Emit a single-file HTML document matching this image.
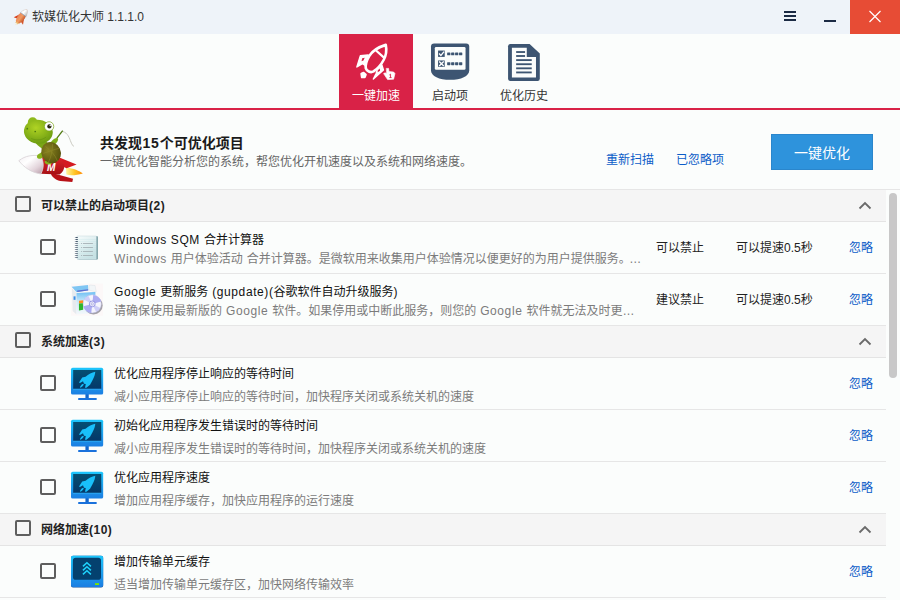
<!DOCTYPE html>
<html lang="zh-CN">
<head>
<meta charset="utf-8">
<title>软媒优化大师</title>
<style>
*{box-sizing:border-box;margin:0;padding:0}
html,body{width:900px;height:600px;overflow:hidden}
body{position:relative;background:#fbfdfc;font-family:"Liberation Sans","Noto Sans CJK SC",sans-serif;font-size:12px;line-height:16px;color:#111}
.abs{position:absolute}
#titlebar{position:absolute;left:0;top:0;width:900px;height:34px;background:#eef3f9}
#title{position:absolute;left:32px;top:9px;height:16px;line-height:16px;color:#333;white-space:nowrap}
#close{position:absolute;left:850px;top:0;width:50px;height:34px;background:#e74c35}
.bar{position:absolute;background:#1b2a44}
#tabline{position:absolute;left:0;top:108px;width:900px;height:2px;background:#d92247}
.tab{position:absolute;top:34px;width:74px;height:74px}
.tab .lbl{position:absolute;left:0;width:74px;top:54px;height:16px;line-height:16px;text-align:center;color:#333;white-space:nowrap}
.tab.on{background:#d92247}
.tab.on .lbl{color:#fff}
.tab svg{position:absolute}
#banner{position:absolute;left:0;top:110px;width:900px;height:79px}
#h1{position:absolute;left:100px;top:134px;font-size:14px;font-weight:bold;line-height:18px;color:#1a1a1a;white-space:nowrap}
#sub{position:absolute;left:100px;top:154px;line-height:16px;color:#666;white-space:nowrap}
.link{position:absolute;color:#0b5cc8;white-space:nowrap;line-height:16px}
#btn{position:absolute;left:771px;top:134px;width:102px;height:36px;background:#2e93dc;border:1px solid #2a86cc;color:#fff;font-size:14px;line-height:36px;text-align:center}
#topline{position:absolute;left:0;top:189px;width:900px;height:1px;background:#e6e6e6}
.sec{position:absolute;left:0;width:886px;height:32px;background:#f5f5f5;border-bottom:1px solid #e4e4e4}
.sec .cb{left:15px;top:6px}
.sec .t{position:absolute;left:41px;top:8px;line-height:16px;font-weight:bold;color:#222;white-space:nowrap}
.sec svg{position:absolute;left:858px;top:11px}
.cb{position:absolute;width:16px;height:16px;border:2px solid #5e5e5e;border-radius:2px}
.row{position:absolute;left:0;width:886px;height:52px;border-bottom:1px solid #e6e6e6}
.row .cb{left:40px;top:17px}
.row .t{position:absolute;left:114px;line-height:16px;color:#111;white-space:nowrap}
.row .d{position:absolute;left:114px;line-height:16px;color:#7b7b7b;white-space:nowrap}
.row.a .t{top:10px}.row.a .d{top:29px}
.row.b .t{top:8px}.row.b .d{top:31px}
.row .s1{position:absolute;left:656px;top:18px;line-height:16px;white-space:nowrap;color:#222}
.row .s2{position:absolute;left:736px;top:18px;line-height:16px;white-space:nowrap;color:#222}
.row .ig{position:absolute;left:849px;top:18px;line-height:16px;color:#0b5cc8;white-space:nowrap}
svg.ic{position:absolute}
.en{letter-spacing:.6px}
#thumb{position:absolute;left:889px;top:193px;width:8px;height:185px;border-radius:4px;background:#c8c8c8}
</style>
</head>
<body>
<svg width="0" height="0" style="position:absolute"><defs>
<linearGradient id="gm" x1="0" y1="0" x2="0" y2="1"><stop offset="0" stop-color="#1cc6fb"/><stop offset="1" stop-color="#1b7ee2"/></linearGradient>
<linearGradient id="gs" x1="0" y1="0" x2="0" y2="1"><stop offset="0" stop-color="#054f72"/><stop offset="1" stop-color="#043869"/></linearGradient>
</defs></svg>
<div id="titlebar">
  <svg class="abs" style="left:8px;top:4px" width="30" height="26" viewBox="0 0 692 600">
<defs><linearGradient id="tg1" x1="0" y1="0" x2="1" y2="0"><stop offset="0" stop-color="#e9875a"/><stop offset=".5" stop-color="#f09a62"/><stop offset="1" stop-color="#c95a2c"/></linearGradient>
<linearGradient id="tg2" x1="0" y1="0" x2="1" y2="0"><stop offset="0" stop-color="#f4f4f4"/><stop offset=".4" stop-color="#ffffff"/><stop offset="1" stop-color="#b4b4b4"/></linearGradient></defs>
<g transform="translate(310,300) rotate(37)">
<path d="M-70,-30 L-140,110 L-60,85 Z" fill="#d63f1c"/>
<path d="M70,-10 L135,120 L55,95 Z" fill="#d4542a"/>
<path d="M-30,140 L0,235 L30,140 Z" fill="#f3e6c0"/>
<path d="M-45,130 L-28,195 L0,150 L28,195 L45,130 Z" fill="#e8a24a"/>
<path d="M0,-215 C65,-170 92,-50 78,70 L52,150 L-52,150 L-78,70 C-92,-50 -65,-170 0,-215 Z" fill="url(#tg1)"/>
<path d="M0,-215 C52,-178 80,-110 82,-70 L-82,-70 C-80,-110 -52,-178 0,-215 Z" fill="url(#tg2)" stroke="#c8ccd2" stroke-width="8"/>
<path d="M-82,-70 L82,-70" stroke="#5b7fa8" stroke-width="10"/>
</g>
</svg>
  <div id="title">软媒优化大师 1.1.1.0</div>
  <div class="bar" style="left:784px;top:11px;width:12px;height:2px"></div>
  <div class="bar" style="left:784px;top:15px;width:12px;height:2px"></div>
  <div class="bar" style="left:784px;top:19px;width:12px;height:2px"></div>
  <div class="bar" style="left:824px;top:20px;width:12px;height:2px"></div>
  <div id="close"><svg class="abs" style="left:18px;top:10px" width="14" height="13" viewBox="0 0 14 13"><path d="M1.5 1 L12.5 12 M12.5 1 L1.5 12" stroke="#fff" stroke-width="1.2" fill="none"/></svg></div>
</div>

<div class="tab on" style="left:339px"><svg style="left:11px;top:4px" width="52" height="48" viewBox="0 0 650 600" fill="none" stroke="#fff" stroke-width="33" stroke-linejoin="round" stroke-linecap="round">
<path d="M447,86 C460,150 452,215 422,272 C392,330 350,380 294,418 C255,440 208,412 198,380 C190,330 210,275 240,225 C275,170 330,122 447,86 Z"/>
<path d="M318,150 L418,238" stroke-width="28"/>
<path d="M226,212 L130,220 L86,362 L156,320 L190,342 Z" fill="#fff" stroke-width="18"/>
<path d="M184,246 L152,252 L144,290 L168,280 Z" fill="#d92247" stroke="none"/>
<path d="M398,338 L418,400 L292,512 L328,440 L338,405 Z" fill="#fff" stroke-width="18"/>
<path d="M372,380 L348,402 L346,428 L376,408 Z" fill="#d92247" stroke="none"/>
<path d="M143,448 L170,436 L196,458 L184,488 L150,490 Z" fill="#fff" stroke-width="28"/>
<path d="M457,380 L482,380 L487,420 L545,425 L562,445 L545,515 L470,520 L420,445 L440,435 L457,448 Z" fill="#fff" stroke-width="8"/>
<path d="M492,462 L507,452 L507,495 M492,495 L520,495" stroke="#d92247" stroke-width="11" stroke-linecap="butt" stroke-linejoin="miter"/>
</svg><div class="lbl">一键加速</div></div>
<div class="tab" style="left:413px"><svg style="left:-3px;top:-4px" width="90" height="85" viewBox="0 0 635 600">
<path d="M148,117 Q148,95 170,95 L396,95 Q418,95 418,117 L418,285 C418,325 360,352 283,352 C206,352 148,325 148,285 Z" fill="#3d5572"/>
<rect x="175" y="120" width="217" height="160" rx="9" fill="#fbfdfc"/>
<g fill="#3d5572">
<rect x="198" y="145" width="47" height="45"/><rect x="198" y="215" width="47" height="45"/>
<rect x="262" y="158" width="23" height="20" rx="4"/><rect x="290" y="158" width="23" height="20" rx="4"/><rect x="318" y="158" width="23" height="20" rx="4"/><rect x="346" y="158" width="23" height="20" rx="4"/>
<rect x="262" y="228" width="23" height="20" rx="4"/><rect x="290" y="228" width="23" height="20" rx="4"/><rect x="318" y="228" width="23" height="20" rx="4"/><rect x="346" y="228" width="23" height="20" rx="4"/>
</g>
<path d="M205,166 L218,180 L240,153" stroke="#fff" stroke-width="9" fill="none"/>
<path d="M206,222 L238,254 M238,222 L206,254" stroke="#fff" stroke-width="9" fill="none"/>
</svg><div class="lbl">启动项</div></div>
<div class="tab" style="left:487px"><svg style="left:-7px;top:-4px" width="90" height="85" viewBox="0 0 635 600">
<path d="M214,98 L350,98 L422,166 L422,344 Q422,360 406,360 L214,360 Q198,360 198,344 L198,114 Q198,98 214,98 Z" fill="#3d5572"/>
<path d="M225,125 L330,125 L330,190 L395,190 L395,335 L225,335 Z" fill="#fbfdfc"/>
<g fill="#3d5572">
<rect x="255" y="149" width="63" height="13"/><rect x="255" y="177" width="63" height="13"/>
<rect x="255" y="206" width="110" height="13"/><rect x="255" y="235" width="110" height="13"/><rect x="255" y="264" width="110" height="13"/><rect x="255" y="293" width="110" height="13"/>
</g>
</svg><div class="lbl">优化历史</div></div>
<div id="tabline"></div>

<svg class="abs" style="left:10px;top:108px" width="100" height="85" viewBox="0 0 706 600">
<defs>
<linearGradient id="mg1" x1="0" y1="0" x2="1" y2="1"><stop offset="0" stop-color="#f3eef1"/><stop offset=".35" stop-color="#ffffff"/><stop offset=".7" stop-color="#e2d3da"/><stop offset="1" stop-color="#b59aa6"/></linearGradient>
<linearGradient id="mg2" x1="0" y1="0" x2="0" y2="1"><stop offset="0" stop-color="#e0262a"/><stop offset="1" stop-color="#a50f14"/></linearGradient>
<linearGradient id="mg3" x1="0" y1="0" x2="1" y2="0"><stop offset="0" stop-color="#fff6a0"/><stop offset=".5" stop-color="#ffc62a"/><stop offset="1" stop-color="#ff8a00"/></linearGradient>
<radialGradient id="mg4" cx=".4" cy=".35" r=".7"><stop offset="0" stop-color="#b0d424"/><stop offset="1" stop-color="#6a9a10"/></radialGradient>
<radialGradient id="mg5" cx=".4" cy=".35" r=".7"><stop offset="0" stop-color="#8a8420"/><stop offset="1" stop-color="#55500c"/></radialGradient>
</defs>
<path d="M370,165 C410,175 420,215 430,240 C438,260 445,268 452,272" stroke="#c9c9c0" stroke-width="7" fill="none"/>
<path d="M395,420 C450,425 490,445 514,462 C470,475 430,478 398,470 Z" fill="url(#mg3)"/>
<path d="M335,345 L470,398 L400,425 L340,400 Z" fill="#d41a20"/>
<path d="M285,455 L445,500 L440,522 L355,515 C315,505 295,485 285,455 Z" fill="#b81217"/>
<path d="M215,340 L345,348 C395,385 395,440 350,470 L215,465 C238,420 238,385 215,340 Z" fill="url(#mg2)"/>
<path d="M62,372 C110,335 160,330 218,338 C240,385 240,420 218,466 C150,455 100,420 62,372 Z" fill="url(#mg1)" stroke="#d9d3d7" stroke-width="6"/>
<text x="262" y="448" font-family="'Liberation Sans',sans-serif" font-size="72" font-weight="bold" font-style="italic" fill="#fff">M</text>
<path d="M195,330 C185,345 190,360 215,358 L245,340 L225,310 Z" fill="#86b31a"/>
<path d="M245,375 C240,395 265,405 290,395 L305,375 Z" fill="#86b31a"/>
<path d="M330,215 L372,160" stroke="#4f7a10" stroke-width="9"/>
<path d="M285,245 C300,225 320,205 338,215 C345,225 330,245 315,260 Z" fill="#7fae18"/>
<path d="M170,235 C190,260 200,270 225,285 L275,255 C255,240 245,225 240,205 Z" fill="#7aa616"/>
<ellipse cx="290" cy="315" rx="68" ry="76" transform="rotate(-25 290 315)" fill="url(#mg5)"/>
<path d="M250,270 C285,300 320,330 335,375 M235,320 C270,310 320,290 345,285 M300,255 C300,300 290,350 270,385" stroke="#8f8a2a" stroke-width="5" fill="none" opacity=".8"/>
<circle cx="160" cy="100" r="34" fill="#8fba1c"/>
<ellipse cx="200" cy="168" rx="102" ry="84" transform="rotate(8 200 168)" fill="url(#mg4)"/>
<circle cx="276" cy="130" r="33" fill="#fff" stroke="#7aa616" stroke-width="5"/>
<circle cx="278" cy="130" r="15" fill="#26260e"/>
<circle cx="284" cy="124" r="5" fill="#fff"/>
<circle cx="122" cy="146" r="6" fill="#4f7a10"/><circle cx="178" cy="166" r="6" fill="#4f7a10"/>
<path d="M150,215 C185,232 225,228 255,205" stroke="#5f8a10" stroke-width="5" fill="none" opacity=".7"/>
</svg>
<div id="h1">共发现<span style="letter-spacing:.8px;margin-left:.5px">15</span>个可优化项目</div>
<div id="sub">一键优化智能分析您的系统，帮您优化开机速度以及系统和网络速度。</div>
<div class="link" style="left:606px;top:152px">重新扫描</div>
<div class="link" style="left:676px;top:152px">已忽略项</div>
<div id="btn">一键优化</div>
<div id="topline"></div>

<div class="sec" style="top:190px"><div class="cb"></div><div class="t">可以禁止的启动项目<span style="letter-spacing:.5px">(2)</span></div><svg width="14" height="9" viewBox="0 0 14 9"><path d="M1.5 7.5 L7 2 L12.5 7.5" stroke="#6a6a6a" stroke-width="1.8" fill="none"/></svg></div>
<div class="row a" style="top:222px"><div class="cb"></div><div class="t"><span class="en">Windows SQM </span>合并计算器</div><div class="d"><span class="en">Windows </span>用户体验活动<span class="en"> </span>合并计算器。是微软用来收集用户体验情况以便更好的为用户提供服务。<span style="margin-left:-1.5px;letter-spacing:-.5px">…</span></div><div class="s1">可以禁止</div><div class="s2">可以提速0.5秒</div><div class="ig">忽略</div></div>
<div class="row a" style="top:274px"><div class="cb"></div><div class="t"><span class="en">Google </span>更新服务<span class="en"> (gupdate)(</span>谷歌软件自动升级服务<span class="en">)</span></div><div class="d">请确保使用最新版的<span class="en"> Google </span>软件。如果停用或中断此服务，则您的<span class="en"> Google </span>软件就无法及时更…</div><div class="s1">建议禁止</div><div class="s2">可以提速0.5秒</div><div class="ig">忽略</div></div>

<div class="sec" style="top:326px"><div class="cb"></div><div class="t">系统加速<span style="letter-spacing:.5px">(3)</span></div><svg width="14" height="9" viewBox="0 0 14 9"><path d="M1.5 7.5 L7 2 L12.5 7.5" stroke="#6a6a6a" stroke-width="1.8" fill="none"/></svg></div>
<div class="row b" style="top:358px"><div class="cb"></div><div class="t">优化应用程序停止响应的等待时间</div><div class="d">减小应用程序停止响应的等待时间，加快程序关闭或系统关机的速度</div><div class="ig">忽略</div></div>
<div class="row b" style="top:410px"><div class="cb"></div><div class="t">初始化应用程序发生错误时的等待时间</div><div class="d">减小应用程序发生错误时的等待时间，加快程序关闭或系统关机的速度</div><div class="ig">忽略</div></div>
<div class="row b" style="top:462px"><div class="cb"></div><div class="t">优化应用程序速度</div><div class="d">增加应用程序缓存，加快应用程序的运行速度</div><div class="ig">忽略</div></div>

<div class="sec" style="top:514px"><div class="cb"></div><div class="t">网络加速<span style="letter-spacing:.5px">(10)</span></div><svg width="14" height="9" viewBox="0 0 14 9"><path d="M1.5 7.5 L7 2 L12.5 7.5" stroke="#6a6a6a" stroke-width="1.8" fill="none"/></svg></div>
<div class="row b" style="top:546px"><div class="cb"></div><div class="t">增加传输单元缓存</div><div class="d">适当增加传输单元缓存区，加快网络传输效率</div><div class="ig">忽略</div></div>

<svg class="ic" style="left:60px;top:360px" width="60" height="50" viewBox="0 0 720 600">
<rect x="305" y="405" width="40" height="55" fill="#1367cd"/>
<rect x="218" y="455" width="222" height="24" rx="6" fill="#1a72dc"/>
<rect x="132" y="92" width="386" height="323" rx="20" fill="url(#gm)"/>
<rect x="158" y="120" width="337" height="226" fill="url(#gs)"/>
<rect x="158" y="346" width="337" height="8" fill="#3cc8ff" opacity=".7"/>
<g fill="#19c0fa" transform="translate(144,96) scale(0.48)">
<path d="M582,92 C500,105 410,160 340,218 L255,240 L175,360 L200,378 L275,330 L300,395 L345,400 L325,492 L360,492 L452,418 C480,350 575,230 582,92 Z"/>
<path d="M292,398 C300,420 250,480 212,492 C185,490 215,430 262,398 Z"/>
</g>
</svg>
<svg class="ic" style="left:60px;top:412px" width="60" height="50" viewBox="0 0 720 600">
<rect x="305" y="405" width="40" height="55" fill="#1367cd"/>
<rect x="218" y="455" width="222" height="24" rx="6" fill="#1a72dc"/>
<rect x="132" y="92" width="386" height="323" rx="20" fill="url(#gm)"/>
<rect x="158" y="120" width="337" height="226" fill="url(#gs)"/>
<rect x="158" y="346" width="337" height="8" fill="#3cc8ff" opacity=".7"/>
<g fill="#19c0fa" transform="translate(144,96) scale(0.48)">
<path d="M582,92 C500,105 410,160 340,218 L255,240 L175,360 L200,378 L275,330 L300,395 L345,400 L325,492 L360,492 L452,418 C480,350 575,230 582,92 Z"/>
<path d="M292,398 C300,420 250,480 212,492 C185,490 215,430 262,398 Z"/>
</g>
</svg>
<svg class="ic" style="left:60px;top:464px" width="60" height="50" viewBox="0 0 720 600">
<rect x="305" y="405" width="40" height="55" fill="#1367cd"/>
<rect x="218" y="455" width="222" height="24" rx="6" fill="#1a72dc"/>
<rect x="132" y="92" width="386" height="323" rx="20" fill="url(#gm)"/>
<rect x="158" y="120" width="337" height="226" fill="url(#gs)"/>
<rect x="158" y="346" width="337" height="8" fill="#3cc8ff" opacity=".7"/>
<g fill="#19c0fa" transform="translate(144,96) scale(0.48)">
<path d="M582,92 C500,105 410,160 340,218 L255,240 L175,360 L200,378 L275,330 L300,395 L345,400 L325,492 L360,492 L452,418 C480,350 575,230 582,92 Z"/>
<path d="M292,398 C300,420 250,480 212,492 C185,490 215,430 262,398 Z"/>
</g>
</svg>
<svg class="ic" style="left:60px;top:548px" width="60" height="50" viewBox="0 0 720 600">
<rect x="132" y="92" width="386" height="383" rx="24" fill="#0f4f9a"/>
<rect x="132" y="92" width="386" height="375" rx="24" fill="url(#gm)"/>
<rect x="155" y="118" width="337" height="264" rx="34" fill="#04416f"/>
<g fill="none" stroke="#1fd2fc" stroke-width="18">
<path d="M275,220 L323,176 L371,220"/><path d="M275,268 L323,224 L371,268"/><path d="M275,316 L323,272 L371,316"/>
</g>
<rect x="420" y="422" width="48" height="22" fill="#7be800"/>
</svg>
<svg class="ic" style="left:68px;top:230px" width="36" height="36" viewBox="0 0 600 600">
<defs><linearGradient id="ng" x1="0" y1="0" x2=".6" y2="1"><stop offset="0" stop-color="#f6fcfc"/><stop offset="1" stop-color="#c9e2e5"/></linearGradient></defs>
<rect x="170" y="104" width="325" height="388" rx="8" fill="#55838c"/>
<rect x="150" y="100" width="325" height="390" rx="6" fill="url(#ng)" stroke="#b7cdd1" stroke-width="6"/>
<g stroke="#b5dfe4" stroke-width="5" opacity=".7"><path d="M165,159 L470,159"/><path d="M165,192 L470,192"/><path d="M165,225 L470,225"/><path d="M165,258 L470,258"/><path d="M165,291 L470,291"/><path d="M165,324 L470,324"/><path d="M165,357 L470,357"/><path d="M165,390 L470,390"/><path d="M165,423 L470,423"/><path d="M165,456 L470,456"/></g>
<g stroke="#9aa3a8" stroke-width="12"><path d="M250,225 L415,225 M250,292 L415,292 M250,358 L415,358 M250,425 L415,425"/><path d="M218,225 L234,225 M218,292 L234,292 M218,358 L234,358 M218,425 L234,425"/></g>
<rect x="115" y="118" width="50" height="14" rx="5" fill="#46566a"/><rect x="115" y="118" width="22" height="14" rx="5" fill="#9aa6b2"/><rect x="115" y="151" width="50" height="14" rx="5" fill="#46566a"/><rect x="115" y="151" width="22" height="14" rx="5" fill="#9aa6b2"/><rect x="115" y="184" width="50" height="14" rx="5" fill="#46566a"/><rect x="115" y="184" width="22" height="14" rx="5" fill="#9aa6b2"/><rect x="115" y="217" width="50" height="14" rx="5" fill="#46566a"/><rect x="115" y="217" width="22" height="14" rx="5" fill="#9aa6b2"/><rect x="115" y="250" width="50" height="14" rx="5" fill="#46566a"/><rect x="115" y="250" width="22" height="14" rx="5" fill="#9aa6b2"/><rect x="115" y="283" width="50" height="14" rx="5" fill="#46566a"/><rect x="115" y="283" width="22" height="14" rx="5" fill="#9aa6b2"/><rect x="115" y="316" width="50" height="14" rx="5" fill="#46566a"/><rect x="115" y="316" width="22" height="14" rx="5" fill="#9aa6b2"/><rect x="115" y="349" width="50" height="14" rx="5" fill="#46566a"/><rect x="115" y="349" width="22" height="14" rx="5" fill="#9aa6b2"/><rect x="115" y="382" width="50" height="14" rx="5" fill="#46566a"/><rect x="115" y="382" width="22" height="14" rx="5" fill="#9aa6b2"/><rect x="115" y="415" width="50" height="14" rx="5" fill="#46566a"/><rect x="115" y="415" width="22" height="14" rx="5" fill="#9aa6b2"/><rect x="115" y="448" width="50" height="14" rx="5" fill="#46566a"/><rect x="115" y="448" width="22" height="14" rx="5" fill="#9aa6b2"/>
</svg>
<svg class="ic" style="left:66px;top:278px" width="42" height="42" viewBox="0 0 600 600">
<defs>
<linearGradient id="ig1" x1="0" y1="0" x2="0" y2="1"><stop offset="0" stop-color="#6fc0f3"/><stop offset=".45" stop-color="#cfeafa"/><stop offset="1" stop-color="#f4f8fb"/></linearGradient>
<linearGradient id="ig2" x1="0" y1="0" x2="1" y2="1"><stop offset="0" stop-color="#ffffff"/><stop offset="1" stop-color="#a9a9ef"/></linearGradient>
</defs>
<rect x="70" y="80" width="460" height="460" fill="#fcf8f8"/>
<path d="M85,150 L150,215 L150,520 L95,470 Z" fill="#e6eaee"/>
<path d="M150,215 L420,200 L420,500 L150,520 Z" fill="url(#ig1)"/>
<path d="M80,125 L315,100 L320,175 L150,205 Z" fill="#7fc6f3"/>
<path d="M160,180 L315,160 L318,180 L160,200 Z" fill="#5d6fd0"/>
<path d="M335,100 L415,108 L432,200 L330,172 Z" fill="#f2f6f8" stroke="#d5dde2" stroke-width="6"/>
<rect x="108" y="262" width="28" height="50" fill="#3a8ee8"/>
<path d="M185,325 L245,318 L245,360 L185,365 Z" fill="#ff8c1a"/>
<path d="M185,365 L245,360 L245,455 L185,465 Z" fill="#2fb52f"/>
<ellipse cx="392" cy="392" rx="132" ry="128" fill="#5a5a66" opacity=".55"/>
<circle cx="375" cy="370" r="130" fill="#f4f4fd" stroke="#b9b9e6" stroke-width="6"/>
<g transform="rotate(42 375 370)">
<path d="M375,370 L300,265 A130,130 0 0 1 445,260 Z" fill="#9d9df0" opacity=".85"/>
<path d="M375,370 L450,475 A130,130 0 0 1 305,480 Z" fill="#9d9df0" opacity=".85"/>
<path d="M375,370 L500,335 A130,130 0 0 1 495,420 Z" fill="#c4c4f6" opacity=".8"/>
<path d="M375,370 L250,405 A130,130 0 0 1 255,320 Z" fill="#c4c4f6" opacity=".8"/>
</g>
<circle cx="375" cy="370" r="42" fill="#e9e9fb" stroke="#7d7dd8" stroke-width="10"/>
<circle cx="375" cy="370" r="16" fill="#fdfdfd" stroke="#6a6ac8" stroke-width="6"/>
</svg>
<div id="thumb"></div>
</body>
</html>
